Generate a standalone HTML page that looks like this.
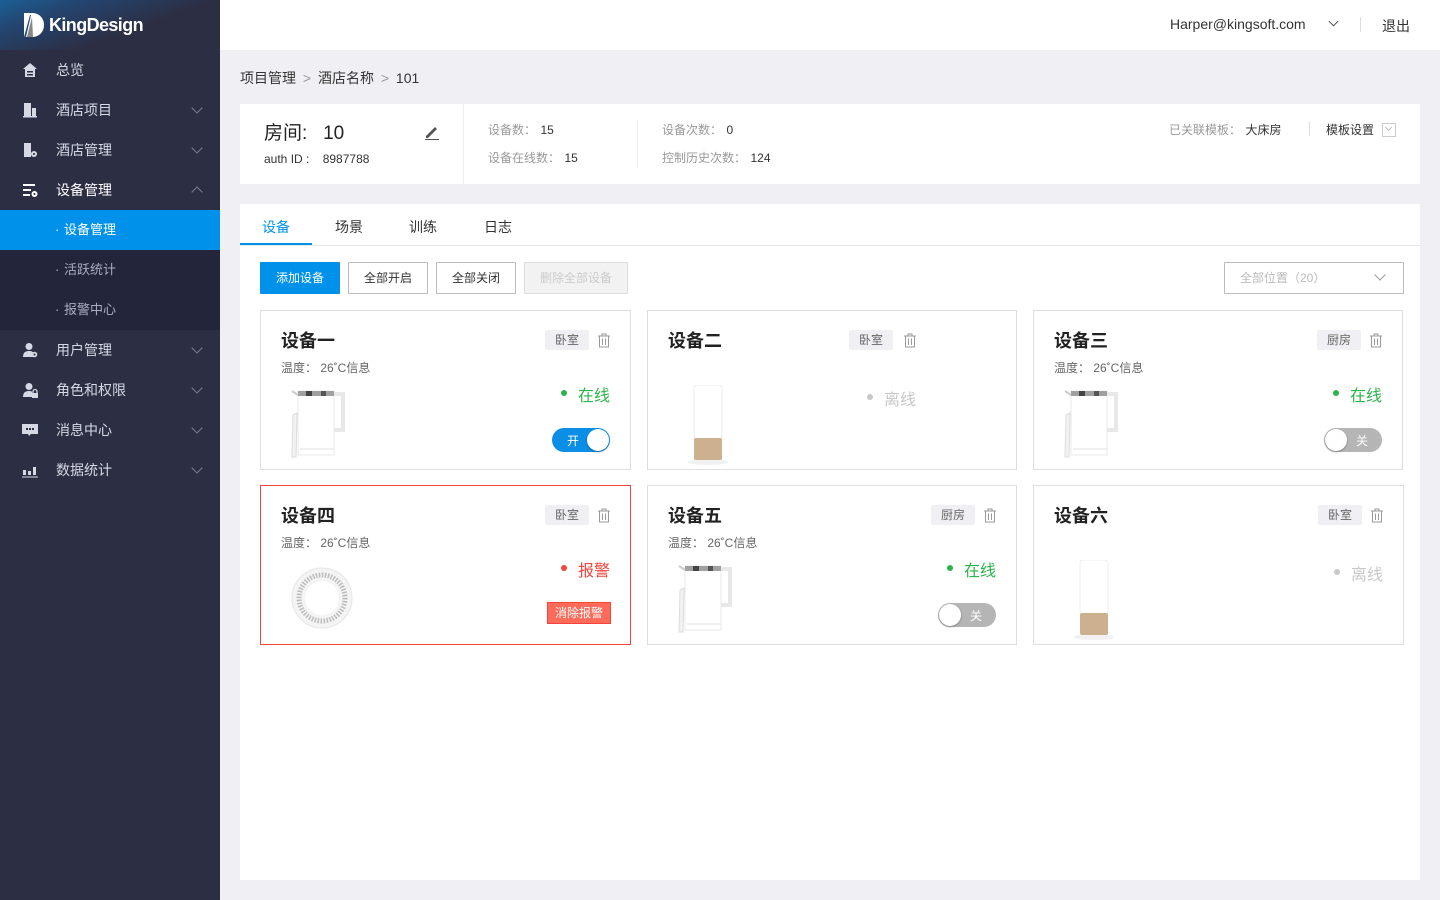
<!DOCTYPE html>
<html><head><meta charset="utf-8"><style>
*{margin:0;padding:0;box-sizing:border-box}
body{width:1440px;height:900px;position:relative;background:#f0f0f4;font-family:"Liberation Sans","Noto Sans CJK SC",sans-serif;color:#333;overflow:hidden}
.a{position:absolute}
#side{left:0;top:0;width:220px;height:900px;background:#2c2f44}
#logo{left:0;top:0;width:220px;height:50px;background:linear-gradient(160deg,#1b5f96 0%,#24446e 25%,#2c2f44 60%)}
.mi{position:absolute;left:0;width:220px;height:40px;color:#d6d8e4;font-size:14px;line-height:40px}
.mi .t{position:absolute;left:56px}
.mi .ic{position:absolute;left:22px;top:12px;width:16px;height:16px}
.mi .ar{position:absolute;left:193px;top:14px;width:8px;height:8px;border-right:1.3px solid #7c8096;border-bottom:1.3px solid #7c8096;transform:rotate(45deg)}
.mi .up{top:18px;transform:rotate(-135deg)}
.sub{font-size:13px;color:#a9adbe}
.sub .t{left:64px}
.sub .t:before{content:"·";position:absolute;left:-9px}
.card{position:absolute;background:#fff;border:1px solid #dedede;width:371px;height:160px}
.card.al{border-color:#f5443b}
.ct{position:absolute;left:20px;top:16px;font-size:18px;color:#222;font-weight:bold}
.tag{position:absolute;top:19px;width:44px;height:20px;background:#f0f0f4;border-radius:2px;font-size:12px;color:#666;text-align:center;line-height:20px;right:41px}
.trash{position:absolute;right:20px;top:22px}
.tmp{position:absolute;left:20px;top:48px;font-size:12px;color:#666}
.st{position:absolute;right:20px;top:71px;font-size:16px}
.st:before{content:"";position:absolute;left:-17px;top:8px;width:6px;height:6px;border-radius:50%;background:currentColor}
.on{color:#2cb34a}.off{color:#c8c8c8}.wr{color:#f5443b}
.sw{position:absolute;right:20px;top:117px;width:58px;height:24px;border-radius:12px}
.sw.y{background:#0a8ee6}
.sw.n{background:#b5b5b5}
.sw i{position:absolute;top:1px;width:22px;height:22px;border-radius:50%;background:#fff;box-shadow:0 1px 2px rgba(0,0,0,.3)}
.sw.y i{right:1px}.sw.n i{left:1px}
.sw span{position:absolute;top:4px;font-size:12px;color:#fff}
.btn{position:absolute;top:262px;height:32px;border:1px solid #bbb;font-size:12px;text-align:center;line-height:30px;color:#333;background:#fff;border-radius:1px}
.lab{color:#999;font-size:12px}
.val{color:#333;font-size:12px}
</style></head><body>
<div id="side" class="a"></div>
<div id="logo" class="a"></div>
<svg class="a" style="left:24px;top:13px" width="20" height="24" viewBox="0 0 20 24"><path d="M0 0H8C15 0 20 5 20 12S15 24 8 24H0Z" fill="#fff"/><path d="M3 24L8 4 9 24Z" fill="#888"/><path d="M0 24L6 2H7L2 24Z" fill="#2c4d78"/></svg>
<div class="a" style="left:49px;top:15px;color:#fff;font-size:18px;font-weight:bold;letter-spacing:-0.6px">KingDesign</div>

<div class="mi" style="top:50px"><svg class="ic" viewBox="0 0 16 16"><path d="M8 1L1 7H3V15H13V7H15Z" fill="#d6d8e4"/><rect x="5" y="9" width="6" height="1.5" fill="#2c2f44"/><rect x="5" y="12" width="6" height="1.5" fill="#2c2f44"/></svg><span class="t">总览</span></div>
<div class="mi" style="top:90px"><svg class="ic" viewBox="0 0 16 16"><path d="M2 1H9V14H2ZM10 6H14V14H10ZM1 14H15V15.5H1Z" fill="#d6d8e4"/></svg><span class="t">酒店项目</span><i class="ar"></i></div>
<div class="mi" style="top:130px"><svg class="ic" viewBox="0 0 16 16"><path d="M2 1H9V15H2Z" fill="#d6d8e4"/><circle cx="12" cy="12" r="3" fill="#d6d8e4"/><circle cx="12" cy="12" r="1" fill="#2c2f44"/></svg><span class="t">酒店管理</span><i class="ar"></i></div>
<div class="mi" style="top:170px;color:#fff"><svg class="ic" viewBox="0 0 16 16"><path d="M1 2H13V4H1ZM1 7H9V9H1ZM1 12H8V14H1Z" fill="#fff"/><circle cx="12.5" cy="12" r="3" fill="#fff"/><circle cx="12.5" cy="12" r="1" fill="#2c2f44"/></svg><span class="t">设备管理</span><i class="ar up"></i></div>
<div class="a" style="left:0;top:250px;width:220px;height:80px;background:#23263a"></div>
<div class="mi sub" style="top:210px;background:#0091ea;color:#fff"><span class="t">设备管理</span></div>
<div class="mi sub" style="top:250px"><span class="t">活跃统计</span></div>
<div class="mi sub" style="top:290px"><span class="t">报警中心</span></div>
<div class="mi" style="top:330px"><svg class="ic" viewBox="0 0 16 16"><circle cx="7" cy="4.5" r="3.5" fill="#d6d8e4"/><path d="M1 15C1 10 4 9 7 9S11 10 11 11V15Z" fill="#d6d8e4"/><circle cx="12.5" cy="12.5" r="2.8" fill="#d6d8e4"/><circle cx="12.5" cy="12.5" r="1" fill="#2c2f44"/></svg><span class="t">用户管理</span><i class="ar"></i></div>
<div class="mi" style="top:370px"><svg class="ic" viewBox="0 0 16 16"><circle cx="7" cy="4.5" r="3.5" fill="#d6d8e4"/><path d="M1 15C1 10 4 9 7 9S10 10 10 10V15Z" fill="#d6d8e4"/><rect x="10" y="11" width="6" height="5" fill="#d6d8e4"/><path d="M11 11V9.5A2 2 0 0 1 15 9.5V11" stroke="#d6d8e4" fill="none" stroke-width="1.3"/></svg><span class="t">角色和权限</span><i class="ar"></i></div>
<div class="mi" style="top:410px"><svg class="ic" viewBox="0 0 16 16"><path d="M0 2H16V12H9L7 14 6 12H0Z" fill="#d6d8e4"/><rect x="4" y="6" width="2" height="2" fill="#2c2f44"/><rect x="7" y="6" width="2" height="2" fill="#2c2f44"/><rect x="10" y="6" width="2" height="2" fill="#2c2f44"/></svg><span class="t">消息中心</span><i class="ar"></i></div>
<div class="mi" style="top:450px"><svg class="ic" viewBox="0 0 16 16"><path d="M1 8H4V13H1ZM6 9H9V13H6ZM11 5H14V13H11ZM0 14.5H16V15.5H0Z" fill="#d6d8e4"/></svg><span class="t">数据统计</span><i class="ar"></i></div>

<div class="a" style="left:220px;top:0;width:1220px;height:50px;background:#fff"></div>
<div class="a" style="left:1170px;top:16px;font-size:14px;color:#333">Harper@kingsoft.com</div>
<div class="a" style="left:1330px;top:18px;width:7px;height:7px;border-right:1.3px solid #555;border-bottom:1.3px solid #555;transform:rotate(45deg)"></div>
<div class="a" style="left:1360px;top:17px;width:1px;height:15px;background:#ddd"></div>
<div class="a" style="left:1382px;top:16px;font-size:14px;color:#333">退出</div>

<div class="a" style="left:240px;top:68px;font-size:14px;color:#333">项目管理 <span style="color:#999;margin:0 3px">&gt;</span> 酒店名称 <span style="color:#999;margin:0 3px">&gt;</span> 101</div>

<div class="a" style="left:240px;top:104px;width:1180px;height:80px;background:#fff"></div>
<div class="a" style="left:463px;top:104px;width:1px;height:80px;background:#eee"></div>
<div class="a" style="left:637px;top:120px;width:1px;height:48px;background:#eee"></div>
<div class="a" style="left:264px;top:118px;font-size:19px;color:#222">房间: &nbsp;&nbsp;10</div>
<svg class="a" style="left:424px;top:124px" width="16" height="16" viewBox="0 0 16 16"><path d="M2 12L11 3 13 5 4 14H2Z" fill="#555"/><rect x="1" y="15" width="14" height="1" fill="#555"/></svg>
<div class="a" style="left:264px;top:152px;font-size:12px;color:#333">auth ID : &nbsp;&nbsp;&nbsp;8987788</div>
<div class="a" style="left:488px;top:121px"><span class="lab">设备数：</span> <span class="val">15</span></div>
<div class="a" style="left:488px;top:149px"><span class="lab">设备在线数：</span> <span class="val">15</span></div>
<div class="a" style="left:662px;top:121px"><span class="lab">设备次数：</span> <span class="val">0</span></div>
<div class="a" style="left:662px;top:149px"><span class="lab">控制历史次数：</span> <span class="val">124</span></div>
<div class="a" style="left:1169px;top:121px"><span class="lab">已关联模板：</span> <span class="val">大床房</span></div>
<div class="a" style="left:1309px;top:122px;width:1px;height:14px;background:#ddd"></div>
<div class="a val" style="left:1326px;top:121px">模板设置</div>
<div class="a" style="left:1382px;top:123px;width:14px;height:14px;border:1px solid #ccc"></div>
<div class="a" style="left:1386px;top:125px;width:5px;height:5px;border-right:1px solid #bbb;border-bottom:1px solid #bbb;transform:rotate(45deg)"></div>

<div class="a" style="left:240px;top:204px;width:1180px;height:676px;background:#fff"></div>
<div class="a" style="left:240px;top:245px;width:1180px;height:1px;background:#e8e8e8"></div>
<div class="a" style="left:240px;top:243px;width:72px;height:2px;background:#0091ea"></div>
<div class="a" style="left:262px;top:217px;font-size:14px;color:#0091ea">设备</div>
<div class="a" style="left:335px;top:217px;font-size:14px;color:#333">场景</div>
<div class="a" style="left:409px;top:217px;font-size:14px;color:#333">训练</div>
<div class="a" style="left:484px;top:217px;font-size:14px;color:#333">日志</div>

<div class="btn" style="left:260px;width:80px;background:#0091ea;border-color:#0091ea;color:#fff">添加设备</div>
<div class="btn" style="left:348px;width:80px">全部开启</div>
<div class="btn" style="left:436px;width:80px">全部关闭</div>
<div class="btn" style="left:524px;width:104px;background:#f2f2f2;border-color:#ddd;color:#ccc">删除全部设备</div>
<div class="btn" style="left:1224px;width:180px;text-align:left;padding-left:15px;color:#bbb">全部位置（20）</div>
<div class="a" style="left:1376px;top:271px;width:8px;height:8px;border-right:1px solid #999;border-bottom:1px solid #999;transform:rotate(45deg)"></div>

<svg width="0" height="0" style="position:absolute"><defs>
<g id="kettle"><path d="M22 10H58L58 74H22Z" fill="#fff" stroke="#e8e8e8"/><rect x="22" y="10" width="36" height="5" fill="#a0a0a0"/><rect x="30" y="10" width="6" height="5" fill="#444"/><rect x="45" y="10" width="5" height="5" fill="#555"/><path d="M58 13H67V49H58" fill="none" stroke="#e8e8e8" stroke-width="4"/><path d="M16 10L22 14" stroke="#ccc" stroke-width="2"/><path d="M17 34L21 32 20 76 16 76Z" fill="#f2f2f2" stroke="#ddd"/><line x1="24" y1="68" x2="58" y2="68" stroke="#e0e0e0"/></g>
<g id="lamp"><ellipse cx="20" cy="77" rx="20" ry="3" fill="#f1f1f1"/><rect x="6" y="0" width="28" height="54" rx="3" fill="#fff" stroke="#ececec"/><rect x="6" y="53" width="28" height="22" rx="2" fill="#cdb090"/></g>
<g id="tr"><path d="M0 3H12M4 3V1H8V3M1.5 3V14H10.5V3M4.5 5.5V12M7.5 5.5V12" stroke="#999" fill="none" stroke-width="1"/></g>
</defs></svg>

<div class="card" style="left:260px;top:310px">
<div class="ct">设备一</div><div class="tag">卧室</div><svg class="trash" width="12" height="15"><use href="#tr"/></svg>
<div class="tmp">温度：&nbsp;26˚C信息</div>
<svg class="a" style="left:15px;top:70px" width="90" height="80"><use href="#kettle"/></svg>
<div class="st on">在线</div>
<div class="sw y"><span style="left:15px">开</span><i></i></div>
</div>
<div class="card" style="left:647px;top:310px;width:370px">
<div class="ct">设备二</div><svg class="trash" style="right:100px" width="12" height="15"><use href="#tr"/></svg>
<div class="tag" style="right:123px">卧室</div>
<svg class="a" style="left:40px;top:74px" width="44" height="82"><use href="#lamp"/></svg>
<div class="st off" style="right:100px;top:75px">离线</div>
</div>
<div class="card" style="left:1033px;top:310px;width:370px">
<div class="ct">设备三</div><div class="tag">厨房</div><svg class="trash" width="12" height="15"><use href="#tr"/></svg>
<div class="tmp">温度：&nbsp;26˚C信息</div>
<svg class="a" style="left:15px;top:70px" width="90" height="80"><use href="#kettle"/></svg>
<div class="st on">在线</div>
<div class="sw n"><i></i><span style="left:32px">关</span></div>
</div>
<div class="card al" style="left:260px;top:485px">
<div class="ct">设备四</div><div class="tag">卧室</div><svg class="trash" width="12" height="15"><use href="#tr"/></svg>
<div class="tmp">温度：&nbsp;26˚C信息</div>
<svg class="a" style="left:29px;top:80px" width="64" height="64"><circle cx="32" cy="32" r="30" fill="#f4f4f4" stroke="#e6e6e6"/><circle cx="32" cy="32" r="23" fill="none" stroke="#bbb" stroke-width="5" stroke-dasharray="1.5 1.5"/><circle cx="32" cy="32" r="17" fill="#fff"/></svg>
<div class="st wr">报警</div>
<div class="a" style="right:19px;top:116px;width:64px;height:22px;background:#ff6b5a;border:1px solid #f5443b;color:#fff;font-size:12px;text-align:center;line-height:20px">消除报警</div>
</div>
<div class="card" style="left:647px;top:485px;width:370px">
<div class="ct">设备五</div><div class="tag">厨房</div><svg class="trash" width="12" height="15"><use href="#tr"/></svg>
<div class="tmp">温度：&nbsp;26˚C信息</div>
<svg class="a" style="left:15px;top:70px" width="90" height="80"><use href="#kettle"/></svg>
<div class="st on">在线</div>
<div class="sw n"><i></i><span style="left:32px">关</span></div>
</div>
<div class="card" style="left:1033px;top:485px;width:371px">
<div class="ct">设备六</div><div class="tag">卧室</div><svg class="trash" width="12" height="15"><use href="#tr"/></svg>
<svg class="a" style="left:40px;top:74px" width="44" height="82"><use href="#lamp"/></svg>
<div class="st off" style="top:75px">离线</div>
</div>
</body></html>
